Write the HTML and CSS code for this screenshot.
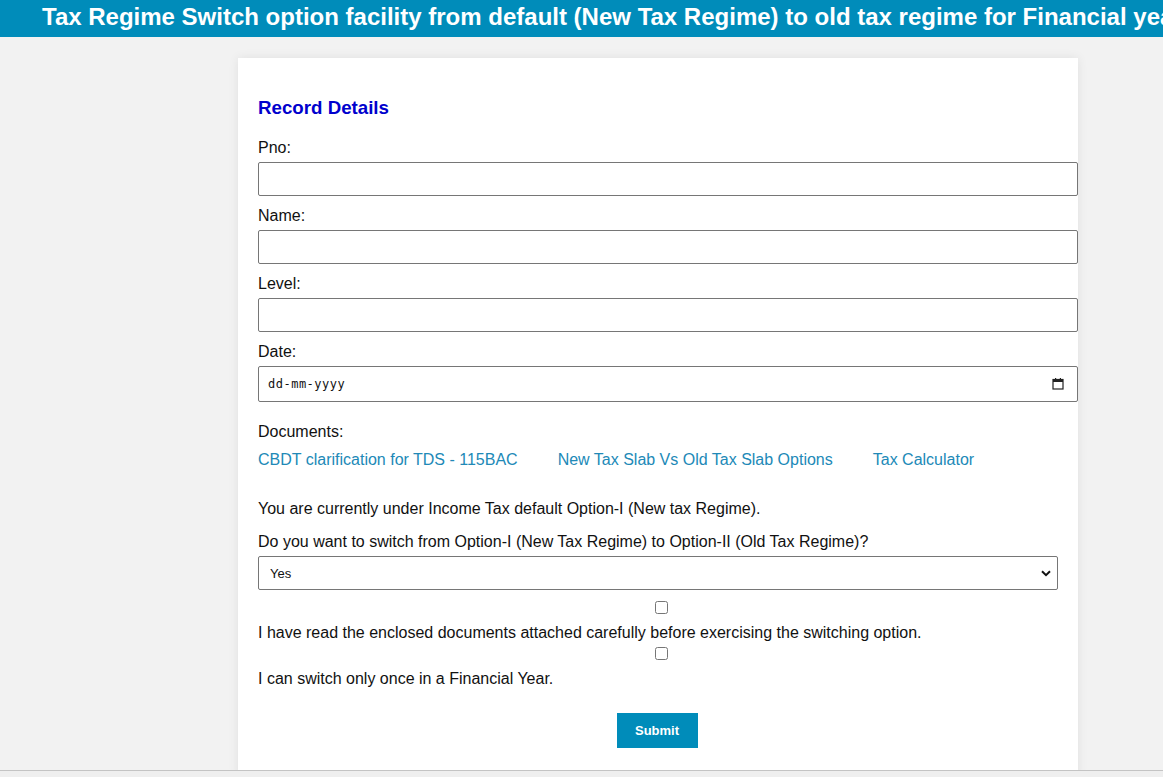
FILE: index.html
```html
<!DOCTYPE html>
<html lang="en">
<head>
<meta charset="utf-8">
<title>Tax Regime Switch</title>
<link rel="stylesheet" href="styles.css">
</head>
<body>
<header class="topbar">
  <h1 class="topbar-title">Tax Regime Switch option facility from default (New Tax Regime) to old tax regime for Financial year 2023-24</h1>
</header>
<main class="page">
  <form class="card">
    <h2 class="card-title">Record Details</h2>

    <label class="field-label" for="pno">Pno:</label>
    <input class="text-input" id="pno" type="text">

    <label class="field-label" for="name">Name:</label>
    <input class="text-input" id="name" type="text">

    <label class="field-label" for="level">Level:</label>
    <input class="text-input" id="level" type="text">

    <label class="field-label">Date:</label>
    <div class="date-input">
      <span class="date-placeholder">dd-mm-yyyy</span>
      <svg class="cal-icon" width="12" height="12" viewBox="0 0 12 12" aria-hidden="true">
        <rect x="1" y="1.5" width="10" height="9.5" fill="none" stroke="#222" stroke-width="1.2"/>
        <rect x="1" y="1.5" width="10" height="2.5" fill="#222"/>
        <rect x="3" y="0" width="1.2" height="2" fill="#222"/>
        <rect x="7.8" y="0" width="1.2" height="2" fill="#222"/>
      </svg>
    </div>

    <div class="docs-label">Documents:</div>
    <div class="doc-links">
      <a class="doc-link" href="#">CBDT clarification for TDS - 115BAC</a>
      <a class="doc-link" href="#">New Tax Slab Vs Old Tax Slab Options</a>
      <a class="doc-link" href="#">Tax Calculator</a>
    </div>

    <p class="info-text">You are currently under Income Tax default Option-I (New tax Regime).</p>
    <p class="question-text">Do you want to switch from Option-I (New Tax Regime) to Option-II (Old Tax Regime)?</p>
    <div class="select-wrap">
      <select class="select-input">
        <option>Yes</option>
        <option>No</option>
      </select>
      <svg class="select-arrow" width="10" height="7" viewBox="0 0 10 7" aria-hidden="true">
        <path d="M1 1.2 L5 5.2 L9 1.2" fill="none" stroke="#111" stroke-width="2"/>
      </svg>
    </div>

    <div class="check-row"><input class="check" type="checkbox" id="c1"></div>
    <label class="check-text" for="c1">I have read the enclosed documents attached carefully before exercising the switching option.</label>
    <div class="check-row check-row-2"><input class="check" type="checkbox" id="c2"></div>
    <label class="check-text" for="c2">I can switch only once in a Financial Year.</label>

    <div class="submit-row">
      <button class="submit-btn" type="button">Submit</button>
    </div>
  </form>
</main>
<div class="hscroll"></div>
</body>
</html>
```

FILE: styles.css
```css
* { box-sizing: border-box; }

html, body {
  margin: 0;
  padding: 0;
}

body {
  background: #f2f2f2;
  font-family: "Liberation Sans", Arial, sans-serif;
  color: #222;
  overflow: hidden;
  height: 777px;
}

.topbar {
  background: #008cba;
  height: 37px;
  overflow: hidden;
  white-space: nowrap;
  padding-left: 42px;
}

.topbar-title {
  margin: 0;
  color: #fff;
  font-size: 24px;
  font-weight: bold;
  line-height: 33px;
}

.page {
  display: flex;
  justify-content: flex-start;
  padding-left: 238px;
  padding-top: 21px;
}

.card {
  width: 840px;
  background: #fff;
  padding: 20px 20px 30px 20px;
  box-shadow: 0 0 10px rgba(0, 0, 0, 0.08);
  display: flex;
  flex-direction: column;
  align-items: flex-start;
}

.card-title {
  margin: 19px 0 19px 0;
  font-size: 18.72px;
  line-height: 22px;
  color: #0000cd;
  font-weight: bold;
}

.field-label {
  display: block;
  font-size: 16px;
  line-height: 18px;
  padding-top: 1px;
  margin-bottom: 5px;
  color: #111;
}

.text-input {
  width: 820px;
  height: 34px;
  border: 1px solid #767676;
  border-radius: 2px;
  padding: 0 9px;
  margin: 0 0 10px 0;
  font-family: inherit;
  font-size: 14px;
  background: #fff;
}

.date-input {
  width: 820px;
  height: 36px;
  border: 1px solid #767676;
  border-radius: 2px;
  display: flex;
  align-items: center;
  justify-content: space-between;
  padding: 0 13px 0 9px;
}

.date-placeholder {
  font-family: "DejaVu Sans Mono", "Liberation Mono", monospace;
  font-size: 12px;
  letter-spacing: 0.5px;
  color: #111;
}

.cal-icon {
  display: block;
  margin-top: -1px;
}

.docs-label {
  margin-top: 21px;
  font-size: 16px;
  line-height: 18px;
  color: #111;
}

.doc-links {
  display: flex;
  gap: 40px;
  margin-top: 10px;
}

.doc-link {
  font-size: 16px;
  line-height: 18px;
  color: #2189b7;
  text-decoration: none;
}

.info-text {
  margin: 31px 0 0 0;
  font-size: 16px;
  line-height: 18px;
  color: #111;
}

.question-text {
  margin: 15px 0 5px 0;
  font-size: 16px;
  line-height: 18px;
  color: #111;
}

.select-wrap {
  position: relative;
  width: 800px;
}

.select-input {
  appearance: none;
  -webkit-appearance: none;
  width: 800px;
  height: 34px;
  border: 1px solid #767676;
  border-radius: 2px;
  background: #fff;
  padding: 0 11px;
  font-family: "Liberation Sans", Arial, sans-serif;
  font-size: 13px;
  color: #111;
  display: block;
}

.select-arrow {
  position: absolute;
  right: 7px;
  top: 14px;
  pointer-events: none;
}

.check-row {
  width: 800px;
  display: flex;
  justify-content: center;
  padding-left: 6px;
  margin-top: 11px;
  height: 14px;
}

.check-row-2 {
  margin-top: 5px;
}

.check {
  margin: 0;
  width: 13px;
  height: 13px;
}

.check-text {
  margin-top: 9px;
  font-size: 16px;
  line-height: 18px;
  color: #111;
}

.submit-row {
  width: 800px;
  display: flex;
  justify-content: center;
  padding-right: 2px;
  margin-top: 25px;
}

.submit-btn {
  background: #008cba;
  color: #fff;
  border: none;
  width: 81px;
  height: 35px;
  font-family: "Liberation Sans", Arial, sans-serif;
  font-size: 13px;
  font-weight: bold;
  cursor: pointer;
}

.hscroll {
  position: fixed;
  left: 0;
  right: 0;
  bottom: 0;
  height: 7px;
  background: #efefef;
  border-top: 1px solid #c4c4c4;
}
```
